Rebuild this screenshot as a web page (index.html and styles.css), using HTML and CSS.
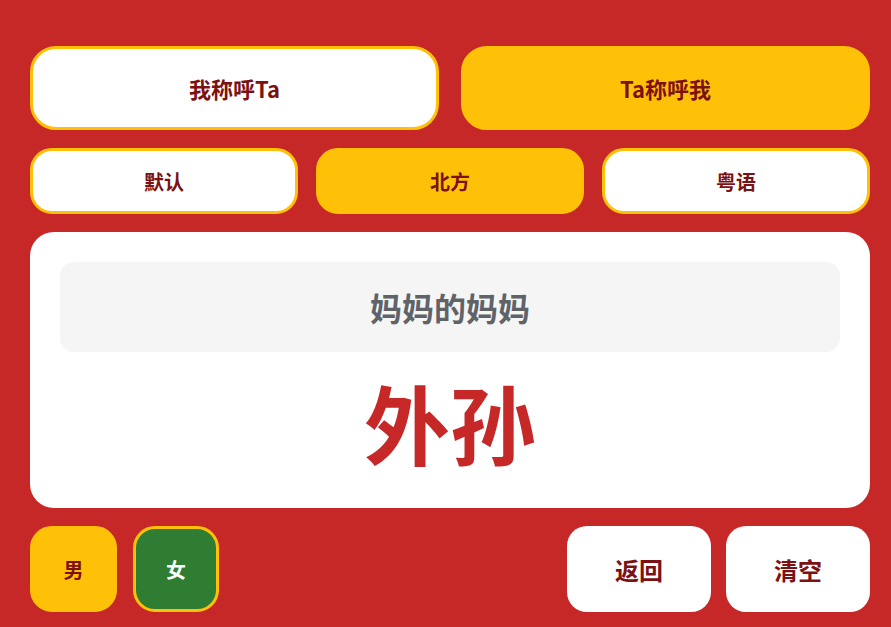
FILE: index.html
```html
<!DOCTYPE html>
<html lang="zh">
<head>
<meta charset="utf-8">
<link rel="stylesheet" href="styles.css">
</head>
<body>
<div class="app">
  <div class="row row-mode">
    <button class="btn btn-lg">我称呼Ta</button>
    <button class="btn btn-lg active">Ta称呼我</button>
  </div>
  <div class="row row-dialect">
    <button class="btn btn-md">默认</button>
    <button class="btn btn-md active">北方</button>
    <button class="btn btn-md">粤语</button>
  </div>
  <div class="card">
    <div class="query">妈妈的妈妈</div>
    <div class="result">外孙</div>
  </div>
  <div class="row row-bottom">
    <div class="group">
      <button class="btn btn-sq active">男</button>
      <button class="btn btn-sq female">女</button>
    </div>
    <div class="group">
      <button class="btn btn-act">返回</button>
      <button class="btn btn-act">清空</button>
    </div>
  </div>
</div>
</body>
</html>
```
FILE: styles.css
```css
* { box-sizing: border-box; }
html, body { margin: 0; padding: 0; }
body {
  background: #c62828;
  font-family: "Noto Sans CJK SC", "Noto Sans", sans-serif;
  width: 891px;
  height: 627px;
  overflow: hidden;
}
.app {
  padding: 46px 21px 0 30px;
  display: flex;
  flex-direction: column;
  gap: 18px;
}
.row { display: flex; }
.btn {
  font-family: inherit;
  font-weight: 700;
  color: #7b1113;
  background: #fff;
  border: 3px solid #ffc107;
  display: flex;
  align-items: center;
  justify-content: center;
  padding: 0;
  margin: 0;
}
.btn.active { background: #ffc107; }
.row-mode { gap: 22px; }
.btn-lg {
  flex: 1;
  height: 84px;
  border-radius: 26px;
  font-size: 22px;
}
.row-dialect { gap: 18px; }
.btn-md {
  flex: 1;
  height: 66px;
  border-radius: 22px;
  font-size: 20px;
}
.card {
  background: #fff;
  border-radius: 24px;
  height: 276px;
  padding: 30px;
  display: flex;
  flex-direction: column;
  align-items: stretch;
}
.query {
  background: #f5f5f5;
  border-radius: 14px;
  height: 90px;
  display: flex;
  align-items: center;
  justify-content: center;
  font-size: 32px;
  font-weight: 700;
  color: #5f6368;
}
.result {
  flex: 1;
  display: flex;
  align-items: center;
  justify-content: center;
  font-size: 86px;
  font-weight: 700;
  color: #c62828;
  line-height: 1;
  padding-top: 14px;
}
.row-bottom { justify-content: space-between; }
.group { display: flex; gap: 15px; }
.btn-sq {
  width: 87px;
  height: 86px;
  border-radius: 22px;
  font-size: 20px;
}
.btn-sq + .btn-sq { margin-left: 1px; }
.btn-sq.female {
  background: #2e7d32;
  color: #fff;
  width: 86px;
}
.btn-act {
  width: 144px;
  height: 86px;
  border-radius: 20px;
  border: none;
  font-size: 24px;
}
```
